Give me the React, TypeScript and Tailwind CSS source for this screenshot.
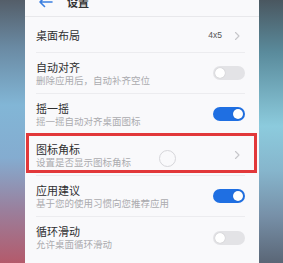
import type { ReactNode } from "react";

const FONT = { fontFamily: '"Noto Sans CJK SC", "Noto Sans", sans-serif' };

function Toggle({ on }: { on: boolean }) {
  return (
    <div
      className={`flex h-[14px] w-[32px] items-center rounded-full px-[2px] ${
        on ? "justify-end bg-[#1f6fe2]" : "justify-start bg-[#e3e3e6]"
      }`}
    >
      <div className="h-[10px] w-[10px] rounded-full bg-white shadow-[0_0_1px_rgba(0,0,0,0.25)]" />
    </div>
  );
}

function Chevron() {
  return (
    <svg width="7" height="10" viewBox="0 0 7 10" fill="none" className="mr-[4px]">
      <path d="M1.5 1.5 L5 5 L1.5 8.5" stroke="#c6c6ca" strokeWidth="1.1" strokeLinecap="round" strokeLinejoin="round" />
    </svg>
  );
}

function Row({ title, sub, right, last }: { title: string; sub: string; right: ReactNode; last?: boolean }) {
  return (
    <div className={`flex h-[41px] items-center justify-between ${last ? "" : "border-b border-[#ececef]"}`}>
      <div className="flex flex-col">
        <span className="text-[11px] leading-[13px] text-[#2e2e30]">{title}</span>
        <span className="text-[9.5px] leading-[12px] text-[#ababaf]">{sub}</span>
      </div>
      {right}
    </div>
  );
}

export default function App() {
  return (
    <div className="flex h-[263px] w-[283px] overflow-hidden" style={FONT}>
      <div className="w-[25px] bg-[linear-gradient(180deg,#545e69_0%,#6a8aa3_18%,#82b6d6_40%,#84acd0_60%,#9a7f9c_80%,#b45a6b_100%)]" />
      <div className="relative flex w-[234px] flex-col bg-[#f9f9fb]">
        <div className="-mt-[12px] flex h-[29px] items-center border-b border-[#e8e8eb] pl-[13px]">
          <svg width="15" height="12" viewBox="0 0 15 12" fill="none">
            <path d="M14 6 H2 M6.5 1.5 L2 6 L6.5 10.5" stroke="#3b7fe0" strokeWidth="1.6" strokeLinecap="round" strokeLinejoin="round" />
          </svg>
          <span className="ml-[14px] text-[11px] font-bold text-[#333]">设置</span>
        </div>
        <div className="flex flex-col pl-[11px] pr-[14px]">
          <div className="flex h-[36px] items-center justify-between border-b border-[#ececef] pt-[2px]">
            <span className="text-[11px] leading-[13px] text-[#2e2e30]">桌面布局</span>
            <div className="flex items-center gap-[12px]">
              <span className="text-[8.5px] font-medium text-[#555]" style={{ fontFamily: '"Liberation Sans", sans-serif' }}>4x5</span>
              <Chevron />
            </div>
          </div>
          <Row title="自动对齐" sub="删除应用后，自动补齐空位" right={<Toggle on={false} />} />
          <Row title="摇一摇" sub="摇一摇自动对齐桌面图标" right={<Toggle on />} />
          <Row title="图标角标" sub="设置是否显示图标角标" right={<Chevron />} />
          <Row title="应用建议" sub="基于您的使用习惯向您推荐应用" right={<Toggle on />} />
          <Row title="循环滑动" sub="允许桌面循环滑动" right={<Toggle on={false} />} last />
        </div>
        <div className="absolute left-[1px] top-[133px] h-[40px] w-[231px] border-[3px] border-[#e2383a]" />
        <div className="absolute left-[134px] top-[150px] h-[17px] w-[17px] rounded-full border border-[#d6d6da]" />
      </div>
      <div className="w-[24px] bg-[linear-gradient(180deg,#4a5760_0%,#5a8b9c_20%,#8ccbdd_48%,#86b5cc_65%,#7790a8_82%,#5a6676_100%)]" />
    </div>
  );
}
